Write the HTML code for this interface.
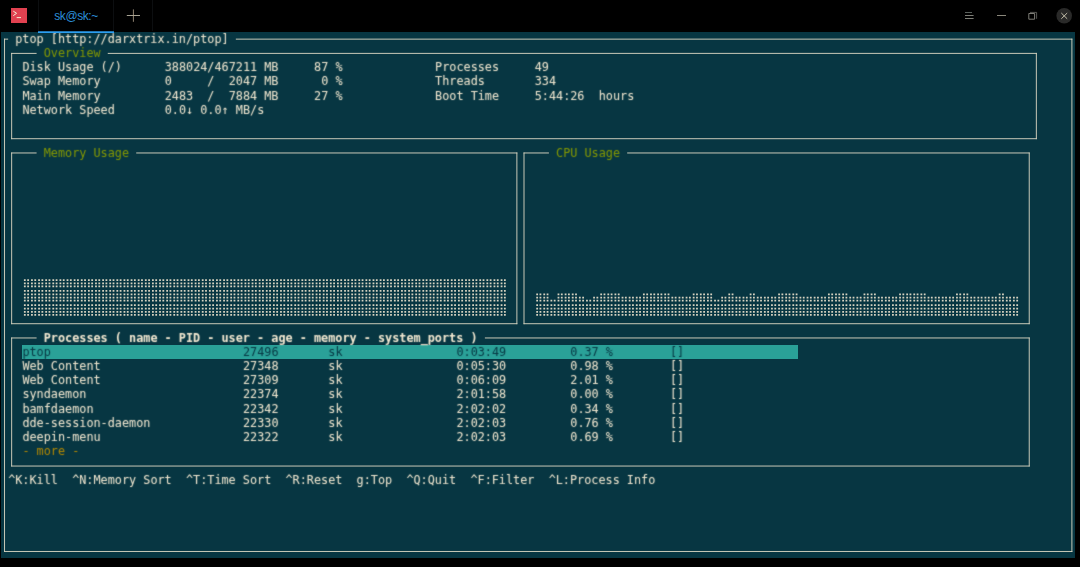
<!DOCTYPE html>
<html lang="en"><head><meta charset="utf-8"><title>sk@sk:~ - ptop</title>
<style>
html,body{margin:0;padding:0;background:#000;overflow:hidden}
body{width:1080px;height:567px;position:relative;font-family:"Liberation Sans",sans-serif}
#bar{position:absolute;left:0;top:0;width:1080px;height:32px;background:#000}
#icon{position:absolute;left:11px;top:8.3px;width:16px;height:14.7px;background:#e14150}
#tab{position:absolute;left:38px;top:0;width:76px;height:31px;border-left:1px solid #0c0e10;border-right:1px solid #0c0e10;box-sizing:border-box}
#tab span{position:absolute;left:0;right:0;top:8.6px;text-align:center;font-size:12px;letter-spacing:-0.45px;line-height:14px;color:#2b8fd9}
#tabline{position:absolute;left:38px;top:31px;width:76px;height:2px;background:linear-gradient(#2c9ef0bb 0,#2c9ef0bb 50%,#2c9ef0 50%);z-index:3}
#sep2{position:absolute;left:152px;top:0;width:1px;height:31px;background:#0c0e10}
#term{position:absolute;left:0.79px;top:31.63px;width:1074.47px;height:526.56px;background:#073642;overflow:hidden;
 font-family:"DejaVu Sans Mono","Liberation Mono",monospace;font-size:11.827px;line-height:14.2313px;color:#f6ebd3}
.t{position:absolute;white-space:pre;height:14.2313px}
.tx{position:absolute;left:0;top:0;width:100%;height:100%;filter:url(#soft)}
.g{color:#859900}
.y{color:#b58900}
.b{font-weight:bold}
.sel{color:#063541}
.hl{position:absolute;background:#2aa198}
.ln{position:absolute;left:0;top:0;fill:#ddd9c4}
.dots{position:absolute;left:0;top:0}
.ic{position:absolute;left:0;top:0}
</style></head><body>
<div id="bar">
<div id="icon"></div>
<div id="tab"><span>sk@sk:~</span></div>
<div id="sep2"></div>
<svg class="ic" width="1080" height="32" viewBox="0 0 1080 32" fill="none" stroke="#a39e91" stroke-width="0.75">
<path d="M13.3 11.2l3.3 2.1-3.3 2.3M16.7 17.6h4.3" stroke="#f6efd6" stroke-width="1"/>
<path d="M126.8 15.5h13.2" stroke="#b9b4a4" stroke-width="0.9"/><path d="M133.4 9.4v12.4" stroke="#b5a58f" stroke-width="0.8"/>
<path d="M965 12.5h7" stroke="#5a605c" stroke-width="1"/>
<path d="M965 15.5h8.6M965 18.5h8.6" stroke="#7d7e76" stroke-width="1"/>
<path d="M997 15.5h9" stroke="#8a877b" stroke-width="1"/>
<path d="M1028.8 13.5h5.8v5.7h-5.8z" stroke="#8b8a82" stroke-width="0.9"/>
<path d="M1030 12.4h6.6v6.4" stroke="#6d6d68" stroke-width="0.8"/>
<circle cx="1064.2" cy="15.8" r="7.8" fill="#2a2a29" stroke="none"/>
<path d="M1061.3 13l5.9 5.8M1067.2 13l-5.9 5.8" stroke="#c4bfab" stroke-width="1"/>
</svg>
</div>
<div id="tabline"></div>
<div id="term">
<svg width="0" height="0" style="position:absolute"><defs><filter id="soft" x="0" y="0" width="100%" height="100%" color-interpolation-filters="sRGB"><feConvolveMatrix order="3" kernelMatrix="0.03 0.09 0.03 0.09 0.52 0.09 0.03 0.09 0.03" divisor="1" edgeMode="none" preserveAlpha="false"/></filter></defs></svg>
<div class="hl" style="left:21.35px;top:313.09px;width:775.61px;height:14.23px"></div>
<svg class="ln" width="1074.47" height="526.56" viewBox="0 0 1074.47 526.56"><rect x="3.11" y="6.67" width="4.01" height="0.9"/><rect x="234.82" y="6.67" width="836.54" height="0.9"/><rect x="3.11" y="518.99" width="1068.25" height="0.9"/><rect x="3.11" y="6.67" width="0.9" height="513.23"/><rect x="1070.46" y="6.67" width="0.9" height="513.23"/><rect x="10.22" y="20.90" width="25.35" height="0.9"/><rect x="106.74" y="20.90" width="929.05" height="0.9"/><rect x="10.22" y="106.28" width="1025.56" height="0.9"/><rect x="10.22" y="20.90" width="0.9" height="86.29"/><rect x="1034.88" y="20.90" width="0.9" height="86.29"/><rect x="10.22" y="120.52" width="25.35" height="0.9"/><rect x="135.20" y="120.52" width="381.14" height="0.9"/><rect x="10.22" y="291.29" width="506.11" height="0.9"/><rect x="10.22" y="120.52" width="0.9" height="171.68"/><rect x="515.44" y="120.52" width="0.9" height="171.68"/><rect x="522.55" y="120.52" width="25.35" height="0.9"/><rect x="626.18" y="120.52" width="402.49" height="0.9"/><rect x="522.55" y="291.29" width="506.11" height="0.9"/><rect x="522.55" y="120.52" width="0.9" height="171.68"/><rect x="1027.77" y="120.52" width="0.9" height="171.68"/><rect x="10.22" y="305.52" width="25.35" height="0.9"/><rect x="483.87" y="305.52" width="544.80" height="0.9"/><rect x="10.22" y="433.60" width="1018.45" height="0.9"/><rect x="10.22" y="305.52" width="0.9" height="128.98"/><rect x="1027.77" y="305.52" width="0.9" height="128.98"/></svg>
<svg class="dots" width="1074.47" height="526.56" viewBox="0 0 1074.47 526.56" fill="none" stroke="#d6d2c0" stroke-width="1.7" stroke-dasharray="1.8 1.500 1.8 2.0157"><path d="M22.91 248.21H504.76"/><path d="M22.91 251.37H504.76"/><path d="M22.91 254.41H504.76"/><path d="M22.91 258.96H504.76"/><path d="M22.91 262.44H504.76"/><path d="M22.91 265.60H504.76"/><path d="M22.91 268.64H504.76"/><path d="M22.91 273.19H504.76"/><path d="M22.91 276.67H504.76"/><path d="M22.91 279.83H504.76"/><path d="M22.91 282.87H504.76"/><path d="M535.24 273.19H1017.09"/><path d="M535.24 276.67H1017.09"/><path d="M535.24 279.83H1017.09"/><path d="M535.24 282.87H1017.09"/><path d="M535.24 262.44H547.45"/><path d="M556.58 262.44H575.92"/><path d="M599.28 262.44H618.61"/><path d="M641.97 262.44H668.42"/><path d="M691.78 262.44H711.11"/><path d="M727.36 262.44H732.46"/><path d="M748.71 262.44H753.81"/><path d="M777.17 262.44H796.50"/><path d="M826.98 262.44H846.31"/><path d="M862.56 262.44H874.78"/><path d="M898.14 262.44H924.59"/><path d="M955.06 262.44H967.28"/><path d="M997.76 262.44H1002.86"/><path d="M535.24 265.60H547.45"/><path d="M556.58 265.60H583.03"/><path d="M592.16 265.60H711.11"/><path d="M720.25 265.60H1017.09"/><path d="M535.24 268.64H1017.09"/></svg>
<div class="tx">
<span class="t " style="left:14.48px;top:0.07px">ptop [http://darxtrix.in/ptop]</span>
<span class="t g" style="left:42.94px;top:14.30px">Overview</span>
<span class="t g" style="left:42.94px;top:113.92px">Memory Usage</span>
<span class="t g" style="left:555.27px;top:113.92px">CPU Usage</span>
<span class="t b" style="left:42.94px;top:298.93px">Processes ( name - PID - user - age - memory - system_ports )</span>
<span class="t " style="left:21.60px;top:28.53px">Disk Usage (/)</span>
<span class="t " style="left:163.91px;top:28.53px">388024/467211 MB</span>
<span class="t " style="left:306.23px;top:28.53px"> 87 %</span>
<span class="t " style="left:21.60px;top:42.76px">Swap Memory</span>
<span class="t " style="left:163.91px;top:42.76px">0     /  2047 MB</span>
<span class="t " style="left:306.23px;top:42.76px">  0 %</span>
<span class="t " style="left:21.60px;top:57.00px">Main Memory</span>
<span class="t " style="left:163.91px;top:57.00px">2483  /  7884 MB</span>
<span class="t " style="left:306.23px;top:57.00px"> 27 %</span>
<span class="t " style="left:21.60px;top:71.23px">Network Speed</span>
<span class="t " style="left:163.91px;top:71.23px">0.0↓ 0.0↑ MB/s</span>
<span class="t " style="left:434.31px;top:28.53px">Processes</span>
<span class="t " style="left:533.93px;top:28.53px">49</span>
<span class="t " style="left:434.31px;top:42.76px">Threads</span>
<span class="t " style="left:533.93px;top:42.76px">334</span>
<span class="t " style="left:434.31px;top:57.00px">Boot Time</span>
<span class="t " style="left:533.93px;top:57.00px">5:44:26  hours</span>
<span class="t sel" style="left:21.60px;top:313.16px">ptop</span>
<span class="t sel" style="left:242.18px;top:313.16px">27496</span>
<span class="t sel" style="left:327.57px;top:313.16px">sk</span>
<span class="t sel" style="left:455.65px;top:313.16px">0:03:49</span>
<span class="t sel" style="left:569.51px;top:313.16px">0.37 %</span>
<span class="t sel" style="left:669.13px;top:313.16px">[]</span>
<span class="t " style="left:21.60px;top:327.39px">Web Content</span>
<span class="t " style="left:242.18px;top:327.39px">27348</span>
<span class="t " style="left:327.57px;top:327.39px">sk</span>
<span class="t " style="left:455.65px;top:327.39px">0:05:30</span>
<span class="t " style="left:569.51px;top:327.39px">0.98 %</span>
<span class="t " style="left:669.13px;top:327.39px">[]</span>
<span class="t " style="left:21.60px;top:341.62px">Web Content</span>
<span class="t " style="left:242.18px;top:341.62px">27309</span>
<span class="t " style="left:327.57px;top:341.62px">sk</span>
<span class="t " style="left:455.65px;top:341.62px">0:06:09</span>
<span class="t " style="left:569.51px;top:341.62px">2.01 %</span>
<span class="t " style="left:669.13px;top:341.62px">[]</span>
<span class="t " style="left:21.60px;top:355.85px">syndaemon</span>
<span class="t " style="left:242.18px;top:355.85px">22374</span>
<span class="t " style="left:327.57px;top:355.85px">sk</span>
<span class="t " style="left:455.65px;top:355.85px">2:01:58</span>
<span class="t " style="left:569.51px;top:355.85px">0.00 %</span>
<span class="t " style="left:669.13px;top:355.85px">[]</span>
<span class="t " style="left:21.60px;top:370.08px">bamfdaemon</span>
<span class="t " style="left:242.18px;top:370.08px">22342</span>
<span class="t " style="left:327.57px;top:370.08px">sk</span>
<span class="t " style="left:455.65px;top:370.08px">2:02:02</span>
<span class="t " style="left:569.51px;top:370.08px">0.34 %</span>
<span class="t " style="left:669.13px;top:370.08px">[]</span>
<span class="t " style="left:21.60px;top:384.32px">dde-session-daemon</span>
<span class="t " style="left:242.18px;top:384.32px">22330</span>
<span class="t " style="left:327.57px;top:384.32px">sk</span>
<span class="t " style="left:455.65px;top:384.32px">2:02:03</span>
<span class="t " style="left:569.51px;top:384.32px">0.76 %</span>
<span class="t " style="left:669.13px;top:384.32px">[]</span>
<span class="t " style="left:21.60px;top:398.55px">deepin-menu</span>
<span class="t " style="left:242.18px;top:398.55px">22322</span>
<span class="t " style="left:327.57px;top:398.55px">sk</span>
<span class="t " style="left:455.65px;top:398.55px">2:02:03</span>
<span class="t " style="left:569.51px;top:398.55px">0.69 %</span>
<span class="t " style="left:669.13px;top:398.55px">[]</span>
<span class="t y" style="left:21.60px;top:412.78px">- more -</span>
<span class="t " style="left:7.37px;top:441.24px">^K:Kill  ^N:Memory Sort  ^T:Time Sort  ^R:Reset  g:Top  ^Q:Quit  ^F:Filter  ^L:Process Info</span>
</div>
</div>
</body></html>
